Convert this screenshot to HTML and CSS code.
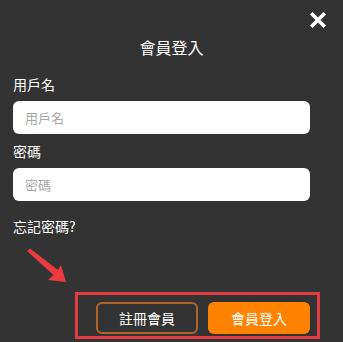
FILE: index.html
```html
<!DOCTYPE html>
<html lang="zh-Hant">
<head>
<meta charset="utf-8">
<link rel="stylesheet" href="styles.css">
</head>
<body>
<div class="modal">
  <button class="close" aria-label="close">
    <svg width="16" height="16" viewBox="0 0 16 16"><path d="M2.5 2.5 L13.5 13.5 M13.5 2.5 L2.5 13.5" stroke="#fff" stroke-width="3.6" stroke-linecap="square"/></svg>
  </button>
  <h1 class="title">會員登入</h1>
  <form class="form">
    <label class="label">用戶名</label>
    <input class="input" type="text" placeholder="用戶名">
    <label class="label">密碼</label>
    <input class="input" type="password" placeholder="密碼">
    <a class="forgot">忘記密碼?</a>
  </form>
  <div class="footer">
    <svg class="arrow" width="60" height="50" viewBox="0 0 60 50"><path d="M7 4 L10 1.5 L38 23 L41 18 L46 35 L28 33 L33.5 28 Z" fill="#ec3b40"/></svg>
    <div class="actions">
      <button class="btn btn-outline">註冊會員</button>
      <button class="btn btn-primary">會員登入</button>
    </div>
  </div>
</div>
</body>
</html>
```
FILE: styles.css
```css
html, body {
  margin: 0;
  padding: 0;
  background: #333333;
  height: 100%;
}
.modal {
  position: relative;
  width: 343px;
  height: 342px;
  box-sizing: border-box;
  font-family: "Noto Sans CJK TC", "Noto Sans", sans-serif;
  color: #fff;
  display: flex;
  flex-direction: column;
}
.close {
  position: absolute;
  top: 12px;
  right: 17px;
  width: 16px;
  height: 16px;
  padding: 0;
  border: 0;
  background: none;
  display: flex;
}
.title {
  margin: 37px 0 0;
  font-size: 16px;
  line-height: 21px;
  font-weight: 400;
  text-align: center;
}
.form {
  display: flex;
  flex-direction: column;
  padding: 0 33px 0 13px;
  margin-top: 16px;
}
.label {
  font-size: 14px;
  line-height: 20px;
  margin-bottom: 7px;
}
.input {
  height: 33px;
  box-sizing: border-box;
  border: 0;
  border-radius: 6px;
  background: #fff;
  padding: 0 12px;
  font-family: inherit;
  font-size: 13px;
  margin: 0 0 7px;
  outline: none;
}
.input::placeholder {
  color: #a6a6a6;
}
.forgot {
  margin-top: 8px;
  font-size: 14px;
  line-height: 20px;
}
.footer {
  position: relative;
  flex: 1;
  display: flex;
  align-items: flex-end;
  justify-content: flex-end;
  padding: 0 23px 3px 0;
}
.arrow {
  position: absolute;
  left: 20px;
  top: 11px;
}
.actions {
  display: flex;
  gap: 10px;
  border: 3px solid #e23b41;
  padding: 7px 7px 2px 18px;
  width: 245px;
  box-sizing: border-box;
  height: 47px;
}
.btn {
  width: 102px;
  height: 32px;
  box-sizing: border-box;
  border-radius: 6px;
  font-family: inherit;
  font-size: 14px;
  color: #fff;
  padding: 0;
}
.btn-outline {
  background: #333;
  border: 2px solid #b0662a;
}
.btn-primary {
  background: #ff8200;
  border: 0;
}
```
